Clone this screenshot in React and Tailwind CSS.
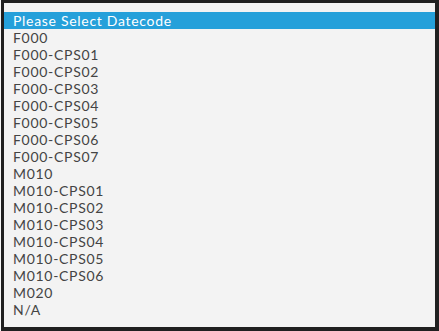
import React from "react";

const options = [
  "F000",
  "F000-CPS01",
  "F000-CPS02",
  "F000-CPS03",
  "F000-CPS04",
  "F000-CPS05",
  "F000-CPS06",
  "F000-CPS07",
  "M010",
  "M010-CPS01",
  "M010-CPS02",
  "M010-CPS03",
  "M010-CPS04",
  "M010-CPS05",
  "M010-CPS06",
  "M020",
  "N/A",
];

export default function App() {
  return (
    <div className="w-[439px] h-[331px] bg-[#f7f7f7] pl-px overflow-hidden">
      <div className="h-[331px] border-t-[3px] border-l-[3px] border-r-4 border-b-4 border-[#202020] bg-[#f3f3f3] pt-[9px] font-['Lato',sans-serif] text-[14px] tracking-[0.7px]">
        <div className="h-[17px] leading-[17px] bg-[#25a0da] text-white pl-[9px]">
          Please Select Datecode
        </div>
        {options.map((o) => (
          <div key={o} className="h-[17px] leading-[17px] text-[#444444] pl-[9px]">
            {o}
          </div>
        ))}
      </div>
    </div>
  );
}
